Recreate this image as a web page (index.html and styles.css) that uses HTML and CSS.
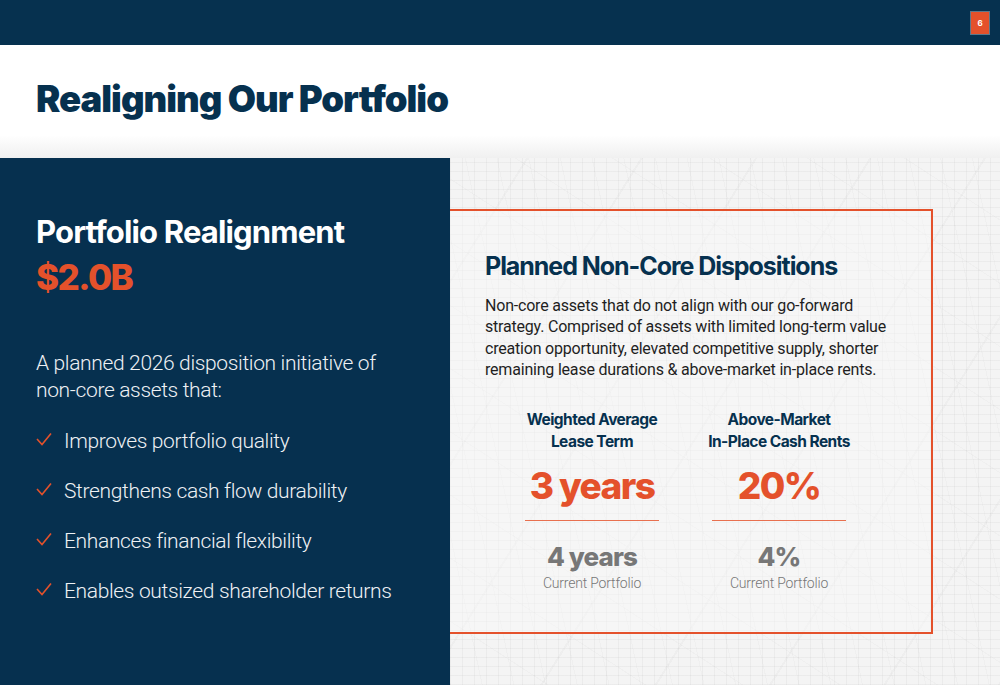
FILE: index.html
```html
<!DOCTYPE html>
<html lang="en">
<head>
<meta charset="utf-8">
<title>Realigning Our Portfolio</title>
<link rel="stylesheet" href="styles.css">
</head>
<body>
<div class="slide">
  <div class="topbar"><span class="badge">6</span></div>
  <header class="header"><h1 class="title">Realigning Our Portfolio</h1></header>
  <main class="main">
    <section class="left">
      <h2 class="left-head">Portfolio Realignment</h2>
      <div class="left-amount">$2.0B</div>
      <p class="left-intro">A planned 2026 disposition initiative of non-core assets that:</p>
      <ul class="checks">
        <li class="check"><svg class="tick" viewBox="0 0 16 14" width="16" height="14"><polyline points="1,7 6,12.5 15,1.5" fill="none" stroke="#e4512b" stroke-width="1.6"/></svg><span>Improves portfolio quality</span></li>
        <li class="check"><svg class="tick" viewBox="0 0 16 14" width="16" height="14"><polyline points="1,7 6,12.5 15,1.5" fill="none" stroke="#e4512b" stroke-width="1.6"/></svg><span>Strengthens cash flow durability</span></li>
        <li class="check"><svg class="tick" viewBox="0 0 16 14" width="16" height="14"><polyline points="1,7 6,12.5 15,1.5" fill="none" stroke="#e4512b" stroke-width="1.6"/></svg><span>Enhances financial flexibility</span></li>
        <li class="check"><svg class="tick" viewBox="0 0 16 14" width="16" height="14"><polyline points="1,7 6,12.5 15,1.5" fill="none" stroke="#e4512b" stroke-width="1.6"/></svg><span>Enables outsized shareholder returns</span></li>
      </ul>
    </section>
    <section class="right">
      <div class="box">
        <h3 class="box-head">Planned Non-Core Dispositions</h3>
        <p class="box-text">Non-core assets that do not align with our go-forward strategy. Comprised of assets with limited long-term value creation opportunity, elevated competitive supply, shorter remaining lease durations &amp; above-market in-place rents.</p>
        <div class="stats">
          <div class="stat">
            <div class="stat-label">Weighted Average<br>Lease Term</div>
            <div class="stat-big">3 years</div>
            <div class="stat-rule"></div>
            <div class="stat-cur">4 years</div>
            <div class="stat-note">Current Portfolio</div>
          </div>
          <div class="stat">
            <div class="stat-label">Above-Market<br>In-Place Cash Rents</div>
            <div class="stat-big">20%</div>
            <div class="stat-rule"></div>
            <div class="stat-cur">4%</div>
            <div class="stat-note">Current Portfolio</div>
          </div>
        </div>
      </div>
    </section>
  </main>
</div>
</body>
</html>
```
FILE: styles.css
```css
* { box-sizing: border-box; }
html, body { margin: 0; padding: 0; }
body { width: 1000px; height: 685px; overflow: hidden; font-family: "Inter", "Roboto", sans-serif; background: #fff; }
.slide { width: 1000px; height: 685px; display: flex; flex-direction: column; }

.topbar { height: 45px; background: #06314f; display: flex; justify-content: flex-end; align-items: center; padding-right: 11px; flex: none; }
.badge { width: 18px; height: 22px; background: #e4512b; color: #fff; font-size: 8px; font-weight: 700; display: flex; align-items: center; justify-content: center; box-shadow: 0 0 0 1px rgba(255,255,255,0.35); }

.header { height: 113px; flex: none; padding: 33px 0 0 36px; background: linear-gradient(to bottom, #fff 0, #fff 90px, #f0f0f0 113px); }
.title { margin: 0; font-family: "Inter", sans-serif; font-weight: 900; font-size: 36.5px; letter-spacing: -1px; color: #06314f; line-height: 1.2; }

.main { flex: 1; display: flex; min-height: 0; }
.left { width: 450px; flex: none; background: #06304f; padding: 55px 0 0 36px; color: #fff; }
.left-head { margin: 0; font-weight: 700; font-size: 31px; letter-spacing: -0.85px; line-height: 38px; }
.left-amount { margin-top: 4px; font-weight: 800; font-size: 35px; color: #e4512b; letter-spacing: -1.6px; line-height: 44px; }
.left-intro { margin: 51px 0 0; font-family: "Roboto", sans-serif; font-weight: 300; font-size: 21px; letter-spacing: -0.35px; line-height: 27px; color: #eef1f4; width: 380px; }
.checks { list-style: none; margin: 12px 0 0; padding: 0; }
.check { display: flex; align-items: center; height: 50px; font-family: "Roboto", sans-serif; font-weight: 300; font-size: 21px; letter-spacing: -0.35px; color: #eef1f4; }
.tick { flex: none; margin-right: 12px; margin-top: -4px; }

.right { flex: 1; padding-top: 51px; background-color: #f4f4f4;
  background-image:
    repeating-linear-gradient(0deg, rgba(0,0,0,0.035) 0 1px, transparent 1px 9px),
    repeating-linear-gradient(90deg, rgba(0,0,0,0.035) 0 1px, transparent 1px 12px),
    repeating-linear-gradient(33deg, rgba(0,0,0,0.02) 0 1px, transparent 1px 53px),
    repeating-linear-gradient(-58deg, rgba(0,0,0,0.025) 0 2px, transparent 2px 97px),
    repeating-linear-gradient(78deg, rgba(0,0,0,0.02) 0 1px, transparent 1px 31px);
}
.box { width: 483px; height: 425px; border: 2px solid #e4512b; border-left: none; padding: 40px 0 0 35px; background: rgba(248,248,248,0.45); }
.box-head { margin: 0; font-weight: 700; font-size: 25px; letter-spacing: -1.05px; color: #06314f; line-height: 30px; }
.box-text { margin: 14px 0 0; font-family: "Roboto", sans-serif; font-weight: 400; font-size: 16px; letter-spacing: -0.2px; line-height: 21.3px; color: #1f1f1f; width: 405px; }
.stats { display: flex; margin: 29px 0 0 17px; gap: 7px; }
.stat { width: 180px; display: flex; flex-direction: column; align-items: center; text-align: center; }
.stat-label { font-weight: 700; font-size: 15.5px; line-height: 21.5px; letter-spacing: -0.55px; color: #06314f; }
.stat-big { margin-top: 12px; font-weight: 800; font-size: 37px; line-height: 44px; letter-spacing: -1.6px; color: #e4512b; }
.stat-rule { width: 134px; height: 1px; background: #e8704f; margin-top: 12px; }
.stat-cur { margin-top: 21px; font-weight: 800; font-size: 26px; line-height: 30px; letter-spacing: -0.9px; color: #777; }
.stat-note { margin-top: 2px; font-family: "Roboto", sans-serif; font-weight: 300; font-size: 14px; letter-spacing: -0.2px; line-height: 18px; color: #777; }
```
